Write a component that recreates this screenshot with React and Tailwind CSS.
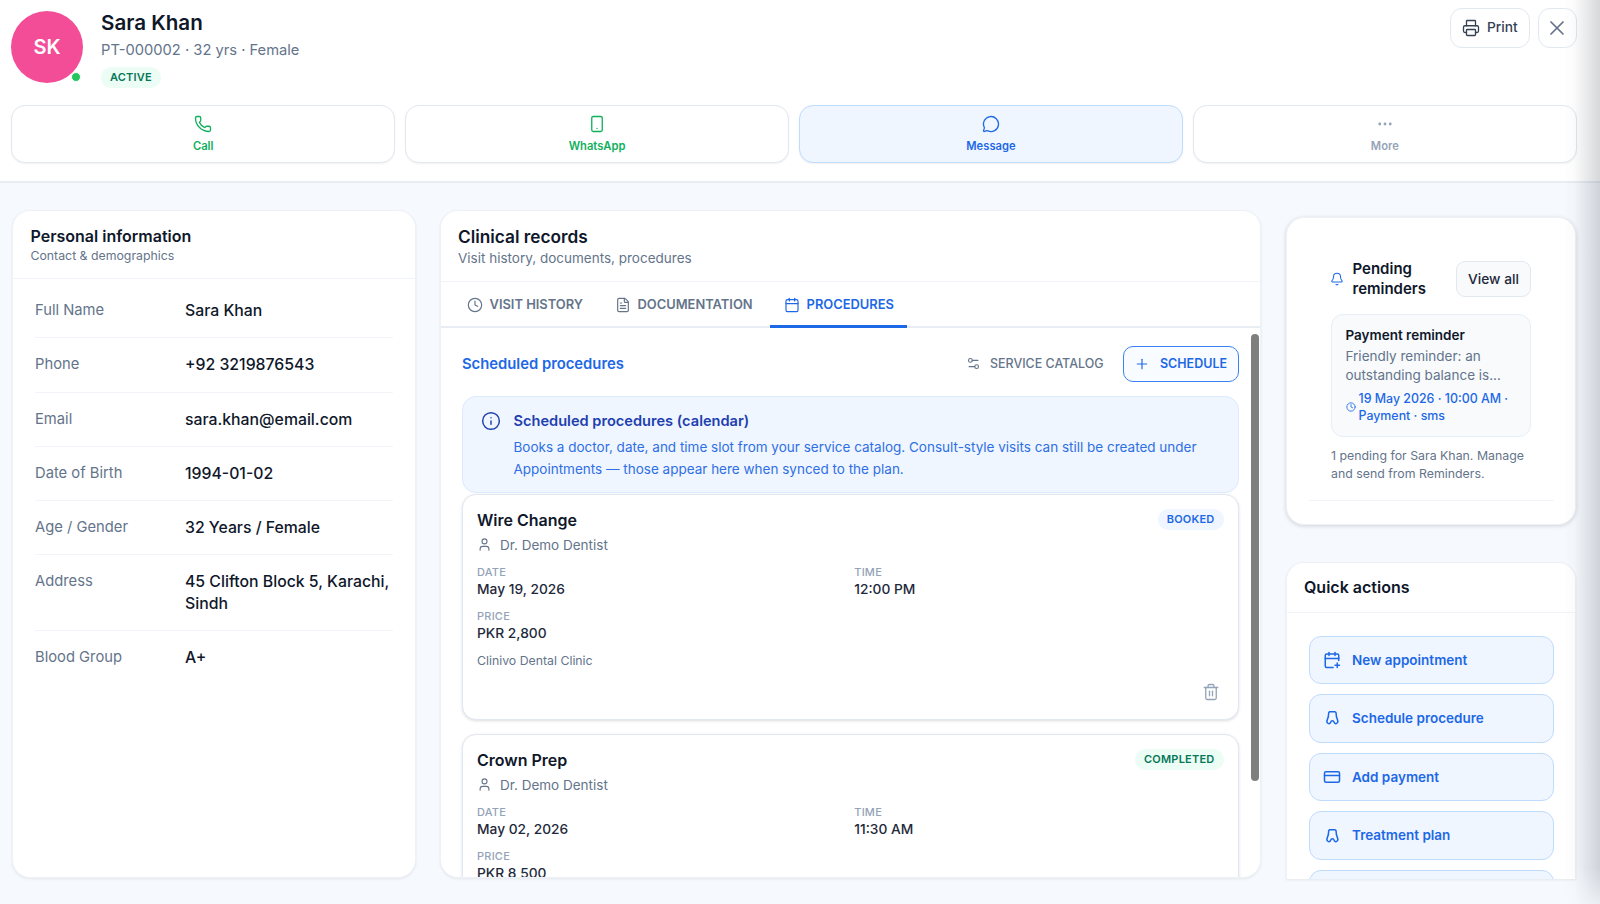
import React from "react";
import { Phone, Smartphone, MessageCircle, MoreHorizontal, Printer, X, Clock, FileText, Calendar, Plus, Info, User, Trash2, Bell, CalendarPlus, CreditCard, Settings2 } from "lucide-react";

function Tooth({ className }) {
  return (
    <svg className={className} viewBox="0 0 24 24" fill="none" stroke="currentColor" strokeWidth="2" strokeLinecap="round" strokeLinejoin="round">
      <path d="M8.500 3.500h7c1.500 0 2 1 2 2.500 0 3 .5 5.500 1.500 7.500 1 2 1 4.500-.5 5.500-1.500 1-3 .5-3.500-1-.4-1.200-1.200-2.500-2.500-2.500s-2.100 1.300-2.500 2.500c-.5 1.500-2 2-3.500 1-1.500-1-1.500-3.500-.5-5.500 1-2 1.500-4.500 1.500-7.500 0-1.500.5-2.500 2-2.500z" />
    </svg>
  );
}

function Action({ icon: I, label, tone }) {
  const cls = {
    green: "bg-white border-[#e2e8f0] text-[#0fb05c]",
    blue: "bg-[#eff6ff] border-[#bfdbfe] text-[#1d68e6]",
    gray: "bg-white border-[#e2e8f0] text-[#94a3b8]",
  }[tone];
  return (
    <button className={`flex h-[58px] flex-1 flex-col items-center justify-center gap-[5px] rounded-[14px] border shadow-[0_1px_2px_rgba(15,23,42,0.06)] ${cls}`}>
      <I className="h-[18px] w-[18px]" strokeWidth={1.75} />
      <span className="text-[11.200px] leading-[16px] font-semibold">{label}</span>
    </button>
  );
}

function InfoRow({ k, v, last }) {
  return (
    <div className={`flex py-[16px] ${last ? "" : "border-b border-[#f1f5f9]"}`}>
      <div className="w-[150px] shrink-0 text-[14.750px] leading-[21.250px] text-[#64748b]">{k}</div>
      <div className="flex-1 text-[15.800px] leading-[21.250px] font-medium text-[#0f172a]">{v}</div>
    </div>
  );
}

function Field({ k, v }) {
  return (
    <div>
      <div className="text-[11px] leading-[14px] font-medium tracking-[0.02em] text-[#94a3b8]">{k}</div>
      <div className="text-[13.750px] leading-[20px] font-medium text-[#1e293b]">{v}</div>
    </div>
  );
}

function Procedure({ title, badge, date, time, price, tall }) {
  const badgeCls = badge === "BOOKED" ? "bg-[#eff6ff] text-[#1d68e6]" : "bg-[#ecfdf5] text-[#047857]";
  return (
    <div className="rounded-[14px] border border-[#e2e8f0] bg-white px-[14px] pt-[14px] pb-[14px] shadow-[0_1px_3px_rgba(15,23,42,0.14)]">
      <div className="flex items-start justify-between">
        <div className="text-[16px] leading-[22px] font-semibold text-[#0f172a]">{title}</div>
        <span className={`rounded-full px-[9px] py-[2px] text-[11px] leading-[17px] font-semibold tracking-[0.02em] ${badgeCls}`}>{badge}</span>
      </div>
      <div className="mt-[2px] flex items-center gap-[8px] text-[13.500px] leading-[24px] text-[#64748b]">
        <User className="h-[15px] w-[15px]" strokeWidth={1.75} />
        Dr. Demo Dentist
      </div>
      <div className="mt-[8px] grid grid-cols-2 gap-x-[8px] gap-y-[10px]">
        <Field k="DATE" v={date} />
        <Field k="TIME" v={time} />
        <Field k="PRICE" v={price} />
      </div>
      {tall && (
        <>
          <div className="mt-[9px] text-[12.300px] leading-[18px] text-[#64748b]">Clinivo Dental Clinic</div>
          <div className="mt-[13px] flex justify-end pr-[4px] pb-[4px]">
            <Trash2 className="h-[18px] w-[18px] text-[#94a3b8]" strokeWidth={1.75} />
          </div>
        </>
      )}
    </div>
  );
}

function Quick({ icon: I, label }) {
  return (
    <button className="flex h-[48.600px] w-full shrink-0 items-center gap-[11px] rounded-[12px] border border-[#bfdbfe] bg-[#eff6ff] pl-[13.500px] text-left text-[13.500px] font-semibold text-[#1d68e6]">
      <I className="h-[18px] w-[18px] shrink-0" strokeWidth={2} />
      {label}
    </button>
  );
}

export default function App() {
  return (
    <div className="relative flex h-[904px] w-[1600px] flex-col overflow-hidden bg-[#f6f9fd] font-['Inter',sans-serif]">
      <header className="h-[183px] shrink-0 border-b-2 border-[#e8edf3] bg-white pt-[11px] pr-[23px] pl-[11px]">
        <div className="flex h-[94px] items-start">
          <div className="relative h-[72px] w-[72px] shrink-0 rounded-full bg-[#f34d98]">
            <div className="flex h-full items-center justify-center text-[20px] font-semibold text-white">SK</div>
            <span className="absolute right-[2.500px] bottom-[1.500px] h-[10px] w-[10px] rounded-full border border-white bg-[#22c55e]" />
          </div>
          <div className="ml-[18px] min-w-0 flex-1">
            <div className="text-[20.600px] leading-[24px] font-semibold text-[#0f172a]">Sara Khan</div>
            <div className="mt-[4px] text-[14.700px] leading-[22px] text-[#64748b]">PT-000002 · 32 yrs · Female</div>
            <span className="mt-[6px] block w-fit rounded-full bg-[#ecfdf5] px-[9px] text-[11px] leading-[21px] font-semibold tracking-[0.02em] text-[#047857]">ACTIVE</span>
          </div>
          <div className="-mt-[3.500px] flex gap-[8px]">
            <button className="flex h-[40px] w-[79.500px] items-center justify-center gap-[7px] rounded-[12px] border border-[#e2e8f0] bg-white text-[13.750px] font-medium text-[#334155]">
              <Printer className="h-[18px] w-[18px]" strokeWidth={1.75} />
              Print
            </button>
            <button className="flex h-[40px] w-[39.500px] items-center justify-center rounded-[12px] border border-[#e2e8f0] bg-white text-[#64748b]">
              <X className="h-[24px] w-[24px]" strokeWidth={1.75} />
            </button>
          </div>
        </div>
        <div className="flex gap-[9.500px]">
          <Action icon={Phone} label="Call" tone="green" />
          <Action icon={Smartphone} label="WhatsApp" tone="green" />
          <Action icon={MessageCircle} label="Message" tone="blue" />
          <Action icon={MoreHorizontal} label="More" tone="gray" />
        </div>
      </header>

      <main className="flex min-h-0 flex-1 gap-[24px] pt-[27px] pr-[24px] pb-[26px] pl-[12px]">
        <section className="w-[404px] shrink-0 overflow-hidden rounded-[18px] border border-[#eef2f6] bg-white shadow-[0_1px_3px_rgba(15,23,42,0.08)]">
          <div className="h-[68px] border-b border-[#f1f5f9] px-[17.500px] pt-[15px]">
            <div className="text-[16px] leading-[20px] font-semibold text-[#0f172a]">Personal information</div>
            <div className="mt-[1px] text-[12.300px] leading-[18px] text-[#64748b]">Contact & demographics</div>
          </div>
          <div className="px-[22px] pt-[5px]">
            <InfoRow k="Full Name" v="Sara Khan" />
            <InfoRow k="Phone" v="+92 3219876543" />
            <InfoRow k="Email" v="sara.khan@email.com" />
            <InfoRow k="Date of Birth" v="1994-01-02" />
            <InfoRow k="Age / Gender" v="32 Years / Female" />
            <InfoRow k="Address" v="45 Clifton Block 5, Karachi, Sindh" />
            <InfoRow k="Blood Group" v="A+" last />
          </div>
        </section>

        <section className="flex w-[821px] shrink-0 flex-col overflow-hidden rounded-[18px] border border-[#eef2f6] bg-white shadow-[0_1px_3px_rgba(15,23,42,0.08)]">
          <div className="h-[71px] shrink-0 border-b border-[#f1f5f9] px-[17px] pt-[14px]">
            <div className="text-[17.250px] leading-[24px] font-semibold text-[#0f172a]">Clinical records</div>
            <div className="-mt-[1px] text-[13.500px] leading-[20px] text-[#64748b]">Visit history, documents, procedures</div>
          </div>
          <div className="flex h-[46px] shrink-0 gap-[3.500px] border-b-2 border-[#e8edf3] pl-[11.500px]">
            <div className="flex items-center gap-[7px] px-[14px] pt-[2px] text-[12.900px] font-semibold text-[#64748b]">
              <Clock className="h-[16px] w-[16px]" strokeWidth={1.75} />
              VISIT HISTORY
            </div>
            <div className="flex items-center gap-[7px] px-[14px] pt-[2px] text-[12.900px] font-semibold text-[#64748b]">
              <FileText className="h-[16px] w-[16px]" strokeWidth={1.75} />
              DOCUMENTATION
            </div>
            <div className="-mb-[2px] flex items-center gap-[7px] border-b-[3px] border-[#1d68e6] px-[13.500px] pt-[2px] text-[12.900px] font-semibold text-[#1d68e6]">
              <Calendar className="h-[16px] w-[16px]" strokeWidth={1.75} />
              PROCEDURES
            </div>
          </div>
          <div className="relative min-h-0 flex-1 overflow-hidden pt-[18px] pr-[21.500px] pl-[21px]">
            <div className="flex h-[36px] items-center justify-between">
              <div className="text-[14.800px] font-semibold text-[#1d68e6]">Scheduled procedures</div>
              <div className="flex items-center gap-[19px]">
                <div className="flex items-center gap-[9.500px] text-[12.450px] font-medium text-[#64748b]">
                  <Settings2 className="h-[15px] w-[15px]" strokeWidth={1.75} />
                  SERVICE CATALOG
                </div>
                <button className="flex h-[36px] w-[116px] items-center justify-center gap-[10px] rounded-[10px] border-[1.500px] border-[#3b82f6] bg-[#f8fbff] text-[12.500px] font-semibold text-[#1d68e6]">
                  <Plus className="h-[16px] w-[16px]" strokeWidth={1.75} />
                  SCHEDULE
                </button>
              </div>
            </div>
            <div className="mt-[13.500px] flex gap-[13px] rounded-[14px] border border-[#dbeafe] bg-[#eff6ff] pt-[13px] pr-[18px] pb-[12px] pl-[17.500px]">
              <Info className="mt-[1px] h-[20px] w-[20px] shrink-0 text-[#1e40af]" strokeWidth={1.75} />
              <div>
                <div className="text-[14.600px] leading-[22px] font-semibold text-[#1e40af]">Scheduled procedures (calendar)</div>
                <div className="mt-[4px] text-[13.500px] leading-[22px] text-[#2f6fe4]">Books a doctor, date, and time slot from your service catalog. Consult-style visits can still be created under Appointments — those appear here when synced to the plan.</div>
              </div>
            </div>
            <div className="mt-[1px] flex flex-col gap-[14px]">
              <Procedure title="Wire Change" badge="BOOKED" date="May 19, 2026" time="12:00 PM" price="PKR 2,800" tall />
              <Procedure title="Crown Prep" badge="COMPLETED" date="May 02, 2026" time="11:30 AM" price="PKR 8,500" />
            </div>
            <div className="absolute top-[6px] right-[1px] h-[447px] w-[8px] rounded-full bg-[#7f7f7f]" />
          </div>
        </section>

        <aside className="-mb-[1px] ml-[1px] flex min-h-0 w-[290px] shrink-0 flex-col gap-[37.500px] pt-[6.500px]">
          <section className="h-[308px] shrink-0 rounded-[18px] border border-[#eef2f6] bg-white px-[21.500px] pt-[41px] shadow-[0_1px_4px_rgba(15,23,42,0.16)]">
            <div className="px-[22.500px]">
              <div className="flex items-center justify-between">
                <div className="flex items-center gap-[8.500px]">
                  <Bell className="-ml-[1px] h-[14px] w-[14px] text-[#1d68e6]" strokeWidth={1.75} />
                  <div className="w-[85px] text-[15px] leading-[20.500px] font-semibold text-[#0f172a]">Pending reminders</div>
                </div>
                <button className="h-[36px] w-[75px] rounded-[9px] border border-[#e2e8f0] bg-[#f8fafc] text-[13.750px] font-medium text-[#1e293b]">View all</button>
              </div>
              <div className="mt-[14px] rounded-[12px] border border-[#e8eef5] bg-[#f8fafc] pt-[10px] pr-[8px] pb-[11.500px] pl-[13.500px]">
                <div className="text-[13.500px] leading-[20px] font-semibold text-[#0f172a]">Payment reminder</div>
                <div className="mt-[2.500px] text-[13.500px] leading-[19px] text-[#64748b]">Friendly reminder: an outstanding balance is...</div>
                <div className="mt-[4.500px] flex items-center gap-[3px] text-[12.400px] leading-[17.700px] font-medium text-[#1d68e6]">
                  <Clock className="h-[10px] w-[10px] shrink-0" strokeWidth={2} />
                  <span>19 May 2026 · 10:00 AM · Payment · sms</span>
                </div>
              </div>
              <div className="mt-[10px] text-[12.350px] leading-[17.400px] text-[#64748b]">1 pending for Sara Khan. Manage and send from Reminders.</div>
            </div>
            <div className="mt-[18px] border-t border-[#f1f5f9]" />
          </section>
          <section className="min-h-0 flex-1 overflow-hidden rounded-t-[18px] border border-b-0 border-[#eef2f6] bg-white shadow-[0_1px_3px_rgba(15,23,42,0.08)]">
            <div className="flex h-[49.500px] items-center border-b border-[#f1f5f9] px-[17px] text-[16px] font-semibold text-[#0f172a]">Quick actions</div>
            <div className="flex flex-col gap-[10px] px-[21.500px] pt-[23px]">
              <Quick icon={CalendarPlus} label="New appointment" />
              <Quick icon={Tooth} label="Schedule procedure" />
              <Quick icon={CreditCard} label="Add payment" />
              <Quick icon={Tooth} label="Treatment plan" />
              <Quick icon={Tooth} label="" />
            </div>
          </section>
        </aside>
      </main>
      <div className="pointer-events-none absolute inset-y-0 right-0 w-[36px] bg-[linear-gradient(to_right,rgba(15,23,42,0),rgba(15,23,42,0.02)_30%,rgba(15,23,42,0.17))] [mask-image:linear-gradient(to_bottom,black_96%,rgba(0,0,0,0.3))]" />
    </div>
  );
}
